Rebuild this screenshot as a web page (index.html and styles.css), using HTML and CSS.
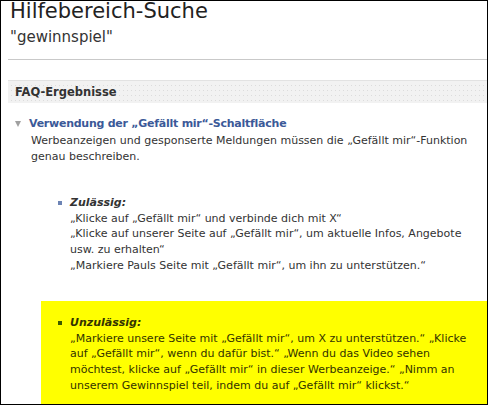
FILE: index.html
```html
<!DOCTYPE html>
<html lang="de">
<head>
<meta charset="utf-8">
<title>Hilfebereich-Suche</title>
<link rel="stylesheet" href="styles.css">
</head>
<body>
<div class="frame">
  <h1 class="title">Hilfebereich-Suche</h1>
  <div class="query">"gewinnspiel"</div>
  <div class="rule"></div>
  <section class="faq">
    <div class="faq-head">FAQ-Ergebnisse</div>
    <div class="item">
      <div class="item-head">
        <span class="tri"></span>
        <span class="item-title">Verwendung der &bdquo;Gefällt mir&ldquo;-Schaltfläche</span>
      </div>
      <div class="item-body">
        <p class="intro">Werbeanzeigen und gesponserte Meldungen müssen die &bdquo;Gefällt mir&ldquo;-Funktion genau beschreiben.</p>
        <ul class="rules">
          <li class="rule-item">
            <span class="label">Zulässig:</span><br>
            &bdquo;Klicke auf &bdquo;Gefällt mir&ldquo; und verbinde dich mit X&ldquo;<br>
            &bdquo;Klicke auf unserer Seite auf &bdquo;Gefällt mir&ldquo;, um aktuelle Infos, Angebote usw. zu erhalten&ldquo;<br>
            &bdquo;Markiere Pauls Seite mit &bdquo;Gefällt mir&ldquo;, um ihn zu unterstützen.&ldquo;
          </li>
          <li class="rule-item highlight">
            <span class="label">Unzulässig:</span><br>
            &bdquo;Markiere unsere Seite mit &bdquo;Gefällt mir&ldquo;, um X zu unterstützen.&ldquo; &bdquo;Klicke auf &bdquo;Gefällt mir&ldquo;, wenn du dafür bist.&ldquo; &bdquo;Wenn du das Video sehen möchtest, klicke auf &bdquo;Gefällt mir&ldquo; in dieser Werbeanzeige.&ldquo; &bdquo;Nimm an unserem Gewinnspiel teil, indem du auf &bdquo;Gefällt mir&ldquo; klickst.&ldquo;
          </li>
        </ul>
      </div>
    </div>
  </section>
</div>
</body>
</html>
```
FILE: styles.css
```css
html, body {
  margin: 0;
  padding: 0;
  background: #fff;
}
.frame {
  box-sizing: border-box;
  width: 488px;
  height: 405px;
  border: 1px solid #000;
  padding-left: 7px;
  overflow: hidden;
  font-family: "DejaVu Sans", Verdana, sans-serif;
  color: #333;
}
.title {
  margin: -1px 0 0 2px;
  font-size: 21px;
  font-weight: normal;
  line-height: 22px;
  color: #222;
}
.query {
  margin: 5px 0 0 2px;
  font-size: 15px;
  line-height: 20px;
}
.rule {
  margin-top: 12px;
  height: 1px;
  background: #c9c9c9;
}
.faq {
  margin-top: 20px;
}
.faq-head {
  height: 22px;
  border-top: 1px solid #e2e2e2;
  background-color: #dcdcdc;
  background-image:
    linear-gradient(90deg, #f2f2f2 0 3px, transparent 3px 4px),
    linear-gradient(#f2f2f2 0 4px, transparent 4px 5px);
  background-size: 4px 100%, 100% 5px;
  padding-left: 7px;
  font-size: 11.5px;
  font-weight: bold;
  line-height: 22px;
  color: #333;
}
.item-head {
  display: flex;
  align-items: center;
  margin-top: 13px;
  height: 16px;
}
.tri {
  width: 0;
  height: 0;
  margin-left: 7px;
  margin-right: 8px;
  border-left: 3.5px solid transparent;
  border-right: 3.5px solid transparent;
  border-top: 6px solid #a0a0a0;
}
.item-title {
  font-size: 11px;
  font-weight: bold;
  letter-spacing: -0.25px;
  color: #3b5998;
  line-height: 16px;
}
.item-body {
  padding-left: 23px;
  font-size: 11px;
  line-height: 15.6px;
}
.intro {
  margin: 1px 0 0;
}
.rules {
  list-style: none;
  margin: 31px 0 0 -23px;
  padding: 0;
}
.rule-item {
  position: relative;
  padding-left: 29px;
  margin-left: 33px;
}
.rule-item::before {
  content: "";
  position: absolute;
  left: 17px;
  top: 6px;
  width: 4px;
  height: 4px;
  background: #6d84b4;
}
.label {
  font-weight: bold;
  font-style: italic;
}
.highlight {
  margin-top: 28px;
  margin-left: 33px;
  padding-top: 14px;
  padding-bottom: 20px;
  background: #ffff00;
  color: #333300;
}
.highlight::before {
  top: 20px;
  background: #3b5900;
}
```
